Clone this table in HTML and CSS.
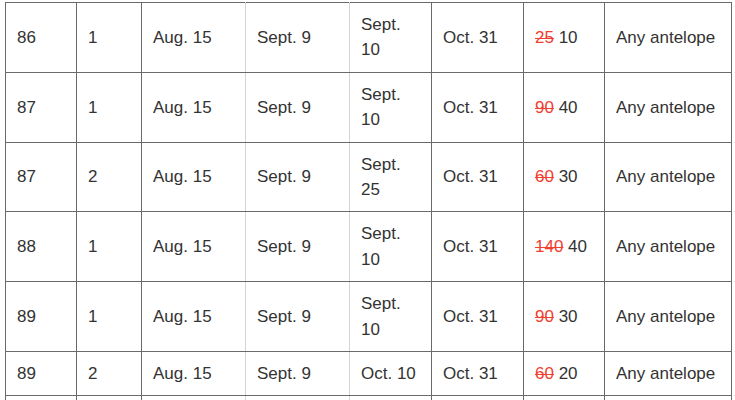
FILE: index.html
```html
<!DOCTYPE html>
<html>
<head>
<meta charset="utf-8">
<link rel="stylesheet" href="styles.css">
</head>
<body>
<table class="seasons">
  <colgroup>
    <col class="c1"><col class="c2"><col class="c3"><col class="c4"><col class="c5"><col class="c6"><col class="c7"><col class="c8">
  </colgroup>
  <tbody>
    <tr><td>86</td><td>1</td><td class="lt">Aug. 15</td><td class="lt">Sept. 9</td><td class="lt2">Sept. 10</td><td>Oct. 31</td><td><s>25</s> 10</td><td>Any antelope</td></tr>
    <tr><td>87</td><td>1</td><td class="lt">Aug. 15</td><td class="lt">Sept. 9</td><td class="lt2">Sept. 10</td><td>Oct. 31</td><td><s>90</s> 40</td><td>Any antelope</td></tr>
    <tr><td>87</td><td>2</td><td class="lt">Aug. 15</td><td class="lt">Sept. 9</td><td class="lt2">Sept. 25</td><td>Oct. 31</td><td><s>60</s> 30</td><td>Any antelope</td></tr>
    <tr><td>88</td><td>1</td><td class="lt">Aug. 15</td><td class="lt">Sept. 9</td><td class="lt2">Sept. 10</td><td>Oct. 31</td><td><s>140</s> 40</td><td>Any antelope</td></tr>
    <tr><td>89</td><td>1</td><td class="lt">Aug. 15</td><td class="lt">Sept. 9</td><td class="lt2">Sept. 10</td><td>Oct. 31</td><td><s>90</s> 30</td><td>Any antelope</td></tr>
    <tr><td>89</td><td>2</td><td class="lt">Aug. 15</td><td class="lt">Sept. 9</td><td class="lt2">Oct. 10</td><td>Oct. 31</td><td><s>60</s> 20</td><td>Any antelope</td></tr>
    <tr class="stub"><td></td><td></td><td class="lt"></td><td class="lt"></td><td class="lt2"></td><td></td><td></td><td></td></tr>
  </tbody>
</table>
</body>
</html>
```
FILE: styles.css
```css
html, body {
  margin: 0;
  padding: 0;
  background: #fff;
  overflow: hidden;
}
body {
  padding: 2px 0 0 5px;
  font-family: "Liberation Sans", Arial, sans-serif;
  font-size: 17px;
  color: #333;
}
.seasons {
  border-collapse: collapse;
  table-layout: fixed;
  width: 726px;
}
.c1 { width: 71px; }
.c2 { width: 65px; }
.c3 { width: 104px; }
.c4 { width: 104px; }
.c5 { width: 82px; }
.c6 { width: 92px; }
.c7 { width: 81px; }
.c8 { width: 127px; }
.seasons td {
  border: 1px solid #6a6a6a;
  padding: 9px 10px 9px 11px;
  line-height: 25.4px;
  vertical-align: middle;
  text-align: left;
}
.seasons td.lt {
  border-left-color: #d4d4d4;
  border-right-color: #d4d4d4;
}
.seasons td.lt2 {
  border-left-color: #d4d4d4;
}
.seasons tr.stub td {
  height: 20px;
}
.seasons s {
  color: #f0402f;
  text-decoration-thickness: 1px;
}
```
